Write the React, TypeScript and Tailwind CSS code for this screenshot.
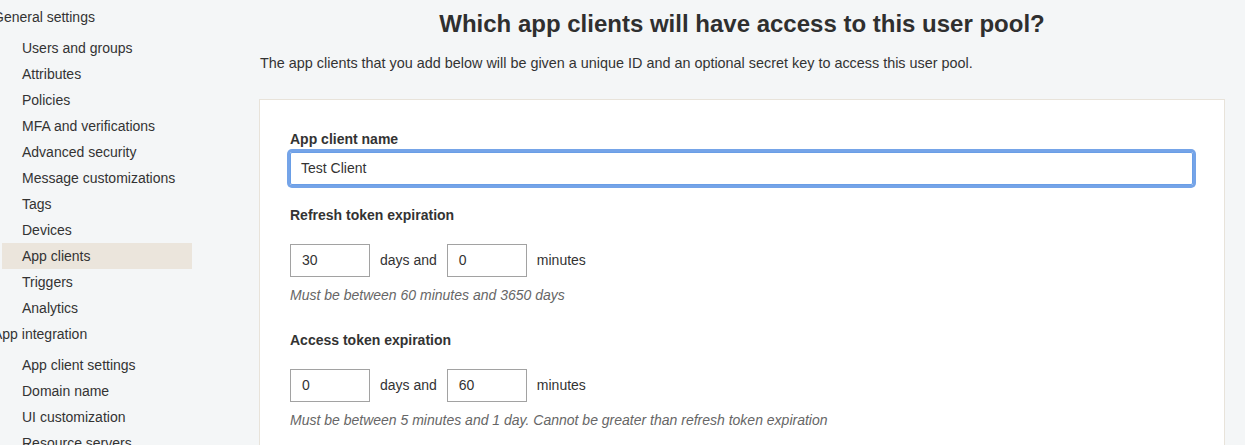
import React from "react";

const generalItems = [
  "Users and groups",
  "Attributes",
  "Policies",
  "MFA and verifications",
  "Advanced security",
  "Message customizations",
  "Tags",
  "Devices",
  "App clients",
  "Triggers",
  "Analytics",
];

const integrationItems = ["App client settings", "Domain name", "UI customization", "Resource servers"];

function NavGroup({ title, items, active }: { title: string; items: string[]; active?: string }) {
  return (
    <div>
      <div className="h-[26px] leading-[26px] -ml-[7px] mb-[5px] whitespace-nowrap">{title}</div>
      {items.map((item) => (
        <div
          key={item}
          className={
            "h-[26px] leading-[26px] ml-[2px] w-[190px] pl-[20px] whitespace-nowrap " +
            (item === active ? "bg-[#ebe5dc]" : "")
          }
        >
          {item}
        </div>
      ))}
    </div>
  );
}

function Expiration({
  title,
  days,
  minutes,
  hint,
}: {
  title: string;
  days: string;
  minutes: string;
  hint: string;
}) {
  return (
    <div>
      <div className="font-bold leading-[20px]">{title}</div>
      <div className="flex items-center mt-[19px]">
        <div className="w-[80px] h-[33px] border border-[#a2a2a2] bg-white pl-[11px] leading-[31px]">{days}</div>
        <span className="ml-[10px] mr-[10px]">days and</span>
        <div className="w-[80px] h-[33px] border border-[#a2a2a2] bg-white pl-[11px] leading-[31px]">{minutes}</div>
        <span className="ml-[10px]">minutes</span>
      </div>
      <div className="mt-[8px] italic leading-[20px] text-[#666]">{hint}</div>
    </div>
  );
}

export default function App() {
  return (
    <div
      className="w-[1245px] h-[445px] overflow-hidden bg-[#f4f6f7] text-[#333] text-[14px] flex"
      style={{ fontFamily: '"Liberation Sans", Arial, sans-serif' }}
    >
      <aside className="w-[259px] shrink-0 pt-[4px] overflow-hidden">
        <NavGroup title="General settings" items={generalItems} active="App clients" />
        <NavGroup title="App integration" items={integrationItems} />
      </aside>
      <main className="w-[966px] shrink-0">
        <h1 className="text-[24px] font-bold text-center leading-[28px] mt-[10px] text-[#2f2f2f]">
          Which app clients will have access to this user pool?
        </h1>
        <p className="mt-[15px] leading-[20px] pl-[1px] text-[14.4px]">
          The app clients that you add below will be given a unique ID and an optional secret key to access this user pool.
        </p>
        <div className="mt-[26px] bg-white border border-[#e8e3da] px-[30px] pt-[29px] pb-[40px]">
          <div className="font-bold leading-[20px]">App client name</div>
          <div className="mt-[3px] h-[33px] border border-[#6a9ee6] ring-[3px] ring-[#75a4e8] rounded-[2px] pl-[10px] leading-[31px] mr-[1px]">
            Test Client
          </div>
          <div className="mt-[20px]">
            <Expiration
              title="Refresh token expiration"
              days="30"
              minutes="0"
              hint="Must be between 60 minutes and 3650 days"
            />
          </div>
          <div className="mt-[25px]">
            <Expiration
              title="Access token expiration"
              days="0"
              minutes="60"
              hint="Must be between 5 minutes and 1 day. Cannot be greater than refresh token expiration"
            />
          </div>
        </div>
      </main>
    </div>
  );
}
